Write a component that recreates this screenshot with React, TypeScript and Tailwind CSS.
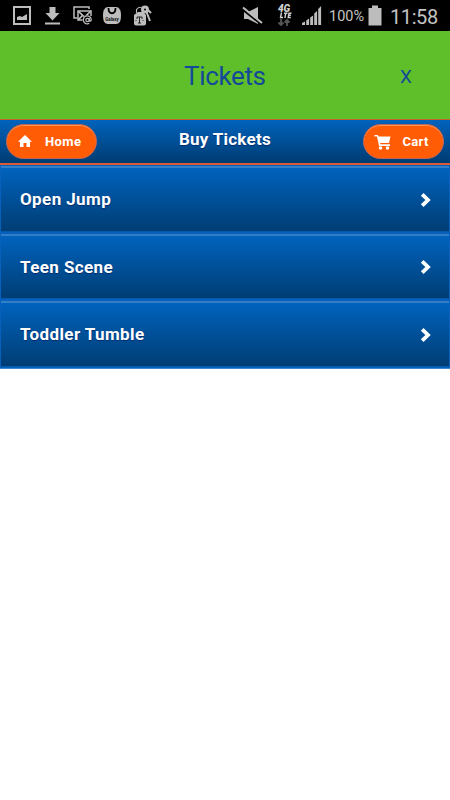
import React from 'react'

const tickets = [
  { id: 1, name: 'Open Jump' },
  { id: 2, name: 'Teen Scene' },
  { id: 3, name: 'Toddler Tumble' },
]

function StatusBar() {
  return (
    <div className="h-[31px] shrink-0 bg-black flex items-center text-[#c4c4c4]">
      <svg width="160" height="31" viewBox="0 0 160 31" fill="none" stroke="#bdbdbd">
        <rect x="14" y="7" width="16" height="17" strokeWidth="2" />
        <path d="M17 20v-3l3-1 2 1 5-3v6z" fill="#bdbdbd" stroke="none" />
        <path d="M49.500 7h6v6h4L52.500 20.500 45.500 13h4zM45 22.500h15v2H45z" fill="#bdbdbd" stroke="none" />
        <path d="M77 18h-3V7h15v2" strokeWidth="1.500" />
        <path d="M84 20h-6v-9h13v5" strokeWidth="1.500" />
        <path d="M78 11l6.500 6 6.500-6M78 20l5-5" strokeWidth="1.700" />
        <circle cx="87.500" cy="20" r="5" fill="#000" stroke="none" />
        <circle cx="87.500" cy="20" r="1.700" strokeWidth="1.200" />
        <path d="M89.300 18v2.500c0 1.200 2 .8 2-.8a4 4 0 1 0-2 3.600" strokeWidth="1.200" />
        <path d="M108 7h8c3 0 5 3 5 8s-1 9-5 9h-8c-4 0-5-4-5-9s2-8 5-8z" fill="#bdbdbd" stroke="none" />
        <path d="M108.500 8c0 7 7 7 7 0" stroke="#000" strokeWidth="1.800" />
        <text x="112" y="20.500" textAnchor="middle" fill="#111" stroke="none" className="font-[Roboto] text-[4.500px] font-bold">Galaxy</text>
        <path d="M134 15l4-3h5l3 3v8.500q0 2-2 2h-8q-2 0-2-2z" fill="#bdbdbd" stroke="none" />
        <path d="M136.500 13V9.500q2-3 5-2" strokeWidth="1.100" />
        <circle cx="145" cy="9.500" r="2.500" strokeWidth="3" />
        <path d="M146.500 12l3.500 9M148 10l3 3" strokeWidth="2" />
        <path d="M137 19v-2h5v2M139.500 17v6M138 23h3M135.500 20.500h1M142.500 20.500h1" stroke="#222" strokeWidth="1" />
      </svg>
      <svg className="ml-[80px]" width="86" height="31" viewBox="240 0 86 31" fill="none">
        <path d="M244 12h4l10-5v17l-10-5h-4z" fill="#bdbdbd" />
        <path d="M242.500 9.500l19 15" stroke="#000" strokeWidth="2" />
        <path d="M243 7.500l19 15.500" stroke="#bdbdbd" strokeWidth="2" />
        <text x="278" y="11.500" fill="#d0d0d0" className="font-[Roboto] text-[10px] leading-none font-black italic">4G</text>
        <path d="M281.500 12.500l-1 5h2.500M284 13.200h3.500M285.800 13.200l-.9 4.800M291.500 13.200h-2.500l-.8 4.300h2.600M288.500 15.300h2.400" stroke="#d0d0d0" strokeWidth="1.400" />
        <path d="M281 19v6m-2.500-2.500L281 25l2.500-2.500M287 26v-6m-2.500 2.500L287 20l2.500 2.500" stroke="#555" strokeWidth="1.800" />
        <path d="M302 25v-2l3-1.500V25zM306.200 25v-4.500l2.900-2V25zM310.200 25v-7.500l2.900-2V25zM314.200 25V13.500l2.900-2.500V25zM318.200 25V9l2.900-3v19z" fill="#bdbdbd" />
      </svg>
      <span className="ml-[3px] w-[36px] text-[14.500px] leading-none whitespace-nowrap pt-[3px]">100%</span>
      <svg className="ml-[3px]" width="14" height="31" viewBox="0 0 14 31">
        <path d="M4 5.500h6V8h3.500v17.500H.5V8H4z" fill="#bdbdbd" />
      </svg>
      <span className="ml-[8px] text-[20px] leading-none tracking-[-0.400px] whitespace-nowrap pt-[3px]">11:58</span>
    </div>
  )
}

function Chevron() {
  return (
    <svg className="mt-[2px]" width="12" height="16" viewBox="0 0 12 16" fill="none" stroke="white" strokeWidth="3.800">
      <path d="M2.200 2.300L8 8l-5.800 5.700" />
    </svg>
  )
}

export default function App() {
  return (
    <div className="w-[450px] h-[800px] bg-white flex flex-col overflow-hidden font-[Roboto,sans-serif]">
      <StatusBar />

      <header className="h-[88px] shrink-0 bg-[#5fbf2a] flex items-start text-[#134999]">
        <h1 className="w-full pl-[184px] pt-[29px] text-[26px] leading-[32px] tracking-[-0.350px]">Tickets</h1>
        <button className="w-[50px] shrink-0 pt-[34px] text-left text-[19px] leading-6">X</button>
      </header>

      <nav className="h-[46px] shrink-0 border-t border-b-2 border-t-[#c8622b] border-b-[#d95a35] bg-linear-to-b from-[#0063bd] to-[#003c72] flex items-start justify-between px-[6px] pt-[4px] text-white font-bold">
        <button className="w-[91px] h-[35px] flex items-center rounded-full bg-[#ff5c05] border border-[#bd6558] pl-[11px] text-[13px] tracking-[0.400px] shadow-[inset_0_1px_0_#ff9354]">
          <svg width="14" height="13" viewBox="0 0 14 13" fill="white">
            <path d="M7 0l7 6.800h-2V12H8.500V8h-3v4H2V6.800H0z" />
          </svg>
          <span className="ml-[13px]">Home</span>
        </button>
        <h2 className="w-[92px] ml-[82px] pt-[3px] text-[17px] leading-6 tracking-[0.250px] whitespace-nowrap [text-shadow:0_1px_1px_#002d70]">Buy Tickets</h2>
        <button className="w-[81px] h-[35px] ml-auto flex items-center rounded-full bg-[#ff5c05] border border-[#bd6558] pl-[10px] text-[13px] tracking-[0.300px] shadow-[inset_0_1px_0_#ff9354]">
          <svg width="18" height="16" viewBox="0 0 18 16" fill="white">
            <path d="M.5 1h3.300l.7 1.500h12L15 9H6l.5 1.300H16V12H5L3 2.500H.5z" />
            <circle cx="6.500" cy="14" r="1.800" />
            <circle cx="13.500" cy="14" r="1.800" />
          </svg>
          <span className="ml-[10.500px]">Cart</span>
        </button>
      </nav>

      <ul className="border-b border-[#3f87cc]">
        {tickets.map((ticket) => (
          <li
            key={ticket.id}
            className="h-[67.500px] border border-[#0760bb] bg-linear-to-b from-[#0064c0] to-[#003d73] shadow-[inset_0_2px_0_#327fc8,inset_0_-1px_0_#0059ad] flex items-center justify-between pl-[19px] pr-[17px] text-white"
          >
            <span className="pt-px text-[17px] leading-6 font-bold tracking-[0.400px] [text-shadow:0_1px_1px_#002d70]">{ticket.name}</span>
            <Chevron />
          </li>
        ))}
      </ul>
    </div>
  )
}
